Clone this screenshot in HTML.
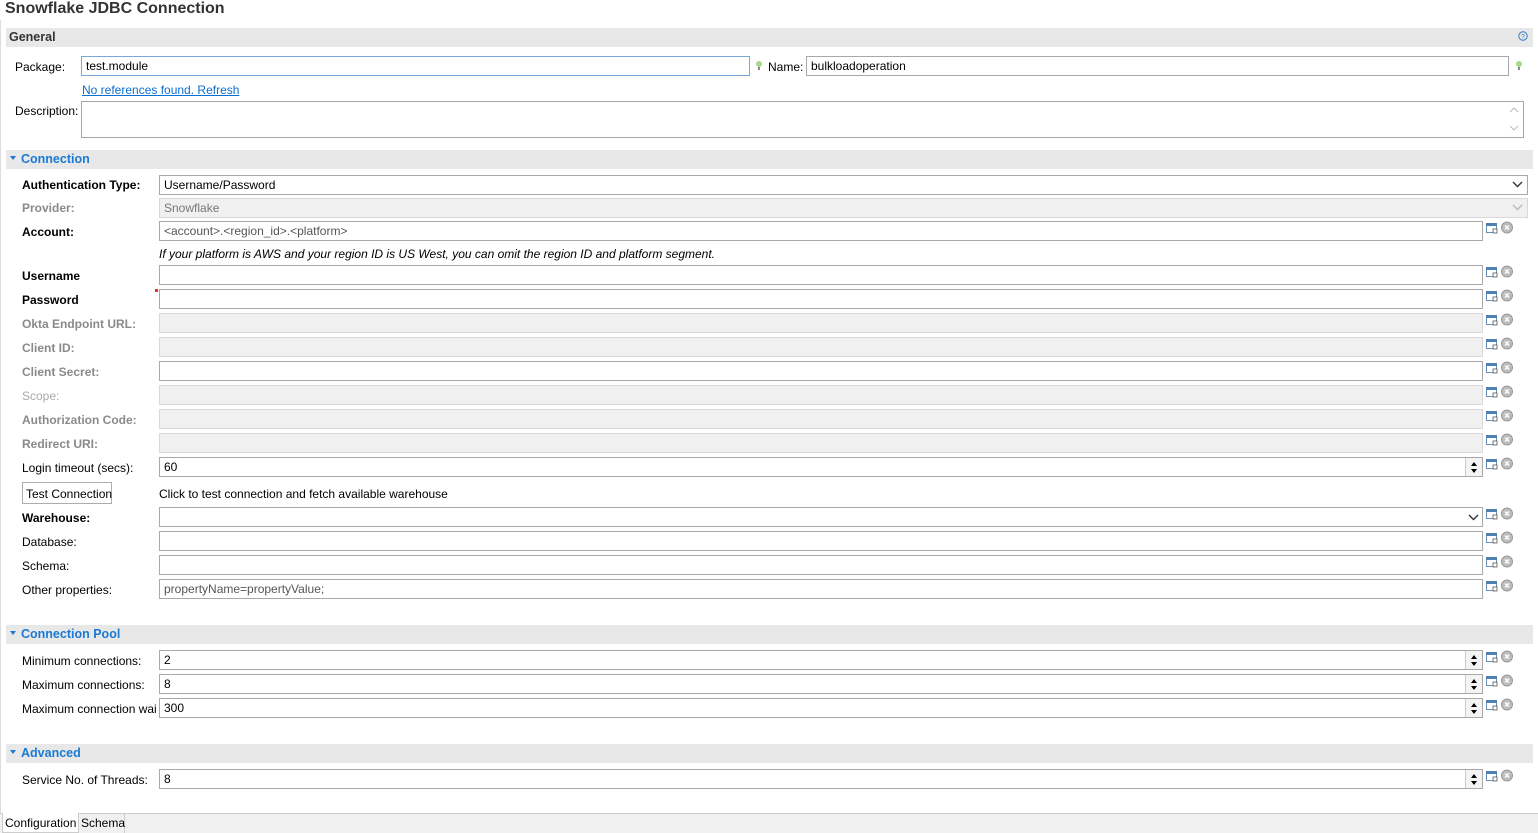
<!DOCTYPE html>
<html><head><meta charset="utf-8"><style>
*{box-sizing:border-box}
body{margin:0;width:1538px;height:833px;background:#fff;font-family:"Liberation Sans",sans-serif;font-size:12px;color:#000;position:relative;overflow:hidden}
.a{position:absolute;white-space:nowrap}
.band{position:absolute;left:6px;width:1527px;height:19px;background:#e8e8e8}
.sec{position:absolute;left:10px;font-weight:bold;color:#1a7ad4;font-size:12.5px}
.sec:before{content:"";display:inline-block;border-left:3px solid transparent;border-right:3px solid transparent;border-top:4px solid #1a7ad4;margin-right:5px;vertical-align:3px}
.lbl{position:absolute;left:22px;white-space:nowrap}
.b{font-weight:bold}
.g{color:#8a8a8a;font-weight:bold}
.f{position:absolute;left:159px;width:1324px;height:20px;border:1px solid #a8a8a8;background:#fff;padding:2px 4px;font-size:12px}
.dis{background:#f0f0f0;border-color:#d8d8d8}
.sp{width:1324px}
.sp:after{content:"";position:absolute;right:0;top:0;width:16px;height:18px;border-left:1px solid #ccc;background:#f4f4f4}
.arr{position:absolute;right:5px;width:0;height:0;border-left:3px solid transparent;border-right:3px solid transparent;z-index:2}
</style></head><body>
<div class="a" style="left:5px;top:0;font-size:16px;font-weight:bold;color:#333">Snowflake JDBC Connection</div>
<div style="position:absolute;left:0;top:20px;width:1px;height:813px;background:#ddd"></div>
<div class="band" style="top:28px"></div>
<div class="a" style="left:9px;top:30px;font-weight:bold;color:#333;font-size:12.5px">General</div>
<svg class="a" style="left:1518px;top:31px" width="10" height="10"><circle cx="5" cy="5" r="4.2" fill="none" stroke="#3b7fc4"/><text x="5" y="8" font-size="7" text-anchor="middle" fill="#3b7fc4" font-family="Liberation Sans">?</text></svg>
<div class="lbl" style="left:15px;top:60px">Package:</div>
<div class="f" style="left:81px;top:56px;width:669px;border-color:#7aa7d9">test.module</div>
<svg class="a" style="left:755px;top:60px" width="8" height="12"><circle cx="4" cy="4" r="3" fill="#a6d98a"/><rect x="3" y="7" width="2" height="3" fill="#888"/></svg>
<div class="a" style="left:768px;top:60px">Name:</div>
<div class="f" style="left:806px;top:56px;width:703px">bulkloadoperation</div>
<svg class="a" style="left:1515px;top:60px" width="8" height="12"><circle cx="4" cy="4" r="3" fill="#a6d98a"/><rect x="3" y="7" width="2" height="3" fill="#888"/></svg>
<div class="a" style="left:82px;top:83px;color:#0b6fd0;text-decoration:underline">No references found. Refresh</div>
<div class="lbl" style="left:15px;top:104px">Description:</div>
<div class="f" style="left:81px;top:101px;width:1443px;height:37px"></div>
<svg class="a" style="left:1509px;top:107px" width="10" height="26"><path d="M1 5l4-4 4 4M1 19l4 4 4-4" fill="none" stroke="#bbb"/></svg>

<div class="band" style="top:150px"></div><div class="sec" style="top:152px">Connection</div>
<div class="lbl b" style="top:178px">Authentication Type:</div>
<div class="f" style="top:175px;width:1369px">Username/Password</div>
<svg class="a" style="left:1512px;top:181px" width="11" height="7"><path d="M1 1l4.5 4.5L10 1" fill="none" stroke="#333" stroke-width="1.4"/></svg>
<div class="lbl g" style="top:201px">Provider:</div>
<div class="f dis" style="top:198px;width:1369px;color:#777">Snowflake</div>
<svg class="a" style="left:1512px;top:204px" width="11" height="7"><path d="M1 1l4.5 4.5L10 1" fill="none" stroke="#bbb" stroke-width="1.4"/></svg>
<div class="lbl b" style="top:225px">Account:</div>
<div class="f" style="top:221px;color:#555">&lt;account&gt;.&lt;region_id&gt;.&lt;platform&gt;</div>
<div class="a" style="left:159px;top:247px;font-style:italic">If your platform is AWS and your region ID is US West, you can omit the region ID and platform segment.</div>

<div class="lbl b" style="top:269px">Username</div><div class="f" style="top:265px"></div>
<div class="lbl b" style="top:293px">Password</div><div class="f" style="top:289px"></div>
<div class="a" style="left:155px;top:289px;width:3px;height:3px;background:#d33"></div>
<div class="lbl g" style="top:317px">Okta Endpoint URL:</div><div class="f dis" style="top:313px"></div>
<div class="lbl g" style="top:341px">Client ID:</div><div class="f dis" style="top:337px"></div>
<div class="lbl g" style="top:365px">Client Secret:</div><div class="f" style="top:361px"></div>
<div class="lbl" style="top:389px;color:#aaa">Scope:</div><div class="f dis" style="top:385px"></div>
<div class="lbl g" style="top:413px">Authorization Code:</div><div class="f dis" style="top:409px"></div>
<div class="lbl g" style="top:437px">Redirect URI:</div><div class="f dis" style="top:433px"></div>
<div class="lbl" style="top:461px">Login timeout (secs):</div>
<div class="f sp" style="top:457px">60<span class="arr" style="top:4px;border-bottom:4px solid #000"></span><span class="arr" style="top:11px;border-top:4px solid #000"></span></div>
<div class="a" style="left:22px;top:482px;width:90px;height:22px;border:1px solid #adadad;background:#fff;padding:4px 3px">Test Connection</div>
<div class="a" style="left:159px;top:487px">Click to test connection and fetch available warehouse</div>
<div class="lbl b" style="top:511px">Warehouse:</div><div class="f" style="top:507px"></div>
<svg class="a" style="left:1468px;top:514px" width="11" height="7"><path d="M1 1l4.5 4.5L10 1" fill="none" stroke="#333" stroke-width="1.4"/></svg>
<div class="lbl" style="top:535px">Database:</div><div class="f" style="top:531px"></div>
<div class="lbl" style="top:559px">Schema:</div><div class="f" style="top:555px"></div>
<div class="lbl" style="top:583px">Other properties:</div><div class="f" style="top:579px;color:#555">propertyName=propertyValue;</div>

<div class="band" style="top:625px"></div><div class="sec" style="top:627px">Connection Pool</div>
<div class="lbl" style="top:654px">Minimum connections:</div>
<div class="f sp" style="top:650px">2<span class="arr" style="top:4px;border-bottom:4px solid #000"></span><span class="arr" style="top:11px;border-top:4px solid #000"></span></div>
<div class="lbl" style="top:678px">Maximum connections:</div>
<div class="f sp" style="top:674px">8<span class="arr" style="top:4px;border-bottom:4px solid #000"></span><span class="arr" style="top:11px;border-top:4px solid #000"></span></div>
<div class="lbl" style="top:702px;width:134px;overflow:hidden">Maximum connection wait</div>
<div class="f sp" style="top:698px">300<span class="arr" style="top:4px;border-bottom:4px solid #000"></span><span class="arr" style="top:11px;border-top:4px solid #000"></span></div>

<div class="band" style="top:744px"></div><div class="sec" style="top:746px">Advanced</div>
<div class="lbl" style="top:773px">Service No. of Threads:</div>
<div class="f sp" style="top:769px">8<span class="arr" style="top:4px;border-bottom:4px solid #000"></span><span class="arr" style="top:11px;border-top:4px solid #000"></span></div>

<div class="a" style="left:0;top:813px;width:1538px;height:20px;background:#f0f0f0;border-top:1px solid #ccc"></div>
<div class="a" style="left:2px;top:813px;width:77px;height:20px;background:#fff;border:1px solid #ccc;border-top:none;padding:3px 2px">Configuration</div>
<div class="a" style="left:79px;top:813px;width:46px;height:20px;border-right:1px solid #ccc;padding:3px 2px">Schema</div>

<svg class="a" style="left:0;top:0" width="1538" height="833">
<defs><g id="ic"><rect x="0.5" y="0.5" width="10" height="9" fill="#fff" stroke="#6a8fb5"/><rect x="0" y="0" width="11" height="3" fill="#4f7fb3"/><rect x="7" y="6" width="4" height="4" fill="#fff" stroke="#555" stroke-width="0.8"/><circle cx="21" cy="4.5" r="5.5" fill="#bdbdbd" stroke="#999"/><path d="M19 2.5l4 4M23 2.5l-4 4" stroke="#fff" stroke-width="1.4"/></g></defs>
<use href="#ic" x="1486" y="223"/><use href="#ic" x="1486" y="267"/><use href="#ic" x="1486" y="291"/><use href="#ic" x="1486" y="315"/><use href="#ic" x="1486" y="339"/><use href="#ic" x="1486" y="363"/><use href="#ic" x="1486" y="387"/><use href="#ic" x="1486" y="411"/><use href="#ic" x="1486" y="435"/><use href="#ic" x="1486" y="459"/><use href="#ic" x="1486" y="509"/><use href="#ic" x="1486" y="533"/><use href="#ic" x="1486" y="557"/><use href="#ic" x="1486" y="581"/><use href="#ic" x="1486" y="652"/><use href="#ic" x="1486" y="676"/><use href="#ic" x="1486" y="700"/><use href="#ic" x="1486" y="771"/>
</svg>
</body></html>
